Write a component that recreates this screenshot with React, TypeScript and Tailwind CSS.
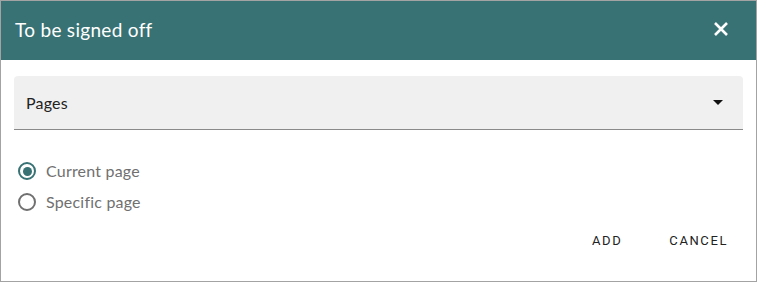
export default function App() {
  const font = { fontFamily: 'Lato, "Open Sans", sans-serif' };
  return (
    <div className="h-[282px] w-[757px] border border-[#a3a3a3] bg-white" style={font}>
      <div className="flex h-[59px] items-center justify-between bg-[#387274] pl-[14px] pr-[27px]">
        <h2 className="text-[19px] font-normal tracking-[0.3px] text-white">To be signed off</h2>
        <svg width="16" height="16" viewBox="0 0 16 16" className="-mt-[3px] text-white">
          <path d="M2 2 L14 14 M14 2 L2 14" stroke="currentColor" strokeWidth="2.6" />
        </svg>
      </div>
      <div className="px-[13px] pt-[16px]">
        <div className="flex h-[54px] items-center justify-between rounded-t-[4px] border-b border-[#8a8a8a] bg-[#f0f0f0] pl-[12px] pr-[20px]">
          <span className="text-[16px] tracking-[0.2px] text-[#222]">Pages</span>
          <svg width="10" height="5" viewBox="0 0 10 5">
            <path d="M0 0 L10 0 L5 5 Z" fill="#111" />
          </svg>
        </div>
        <div className="mt-[30px] flex flex-col gap-[9px] pl-[4px]">
          <label className="flex h-[22px] items-center gap-[10px]">
            <span className="flex h-[18px] w-[18px] items-center justify-center rounded-full border-2 border-[#387274]">
              <span className="h-[9px] w-[9px] rounded-full bg-[#387274]" />
            </span>
            <span className="text-[16px] leading-[22px] tracking-[0.2px] text-[#707070]">Current page</span>
          </label>
          <label className="flex h-[22px] items-center gap-[10px]">
            <span className="h-[18px] w-[18px] rounded-full border-2 border-[#707070]" />
            <span className="text-[16px] leading-[22px] tracking-[0.2px] text-[#707070]">Specific page</span>
          </label>
        </div>
        <div className="mt-[18px] flex justify-end gap-[47px] pr-[15px]" style={{ fontFamily: 'Roboto, sans-serif' }}>
          <button className="text-[13px] leading-[20px] tracking-[1.6px] text-[#222]">ADD</button>
          <button className="text-[13px] leading-[20px] tracking-[1.6px] text-[#222]">CANCEL</button>
        </div>
      </div>
    </div>
  );
}
